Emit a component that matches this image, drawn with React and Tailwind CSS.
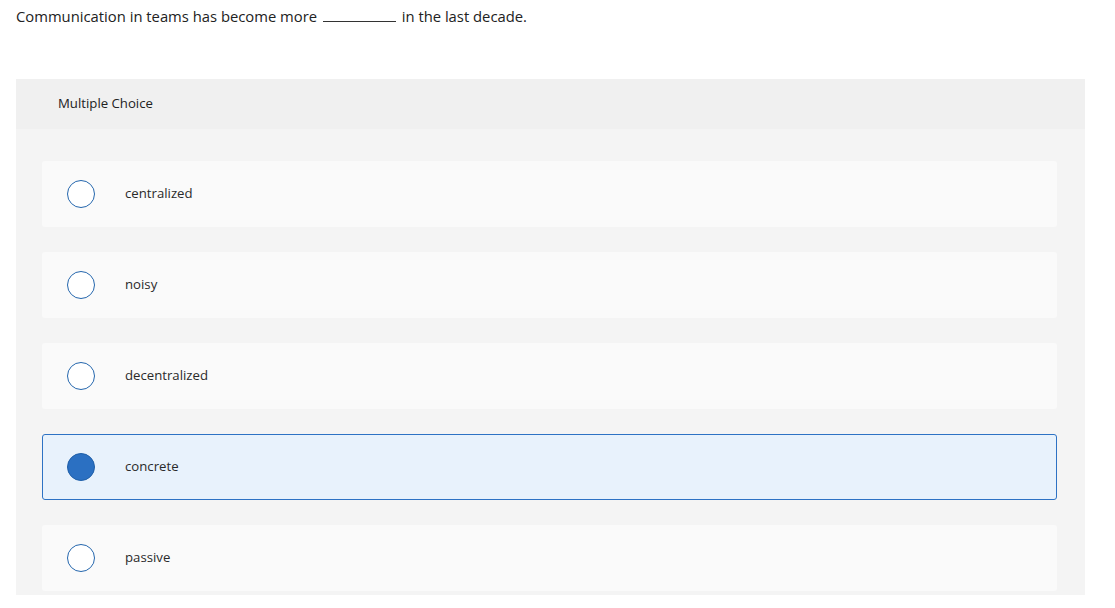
import { useState } from 'react';

const OPTIONS = ['centralized', 'noisy', 'decentralized', 'concrete', 'passive'];

function Radio({ checked }) {
  return (
    <span
      className={
        checked
          ? 'w-[28px] h-[28px] rounded-full border-[1.5px] border-[#1f5fa8] bg-[#2b70c2] shrink-0'
          : 'w-[28px] h-[28px] rounded-full border-[1.5px] border-[#2466ad] bg-white shrink-0'
      }
    />
  );
}

export default function App() {
  const [picked, setPicked] = useState('concrete');

  return (
    <div className="bg-white w-[1115px] h-[608px] overflow-hidden text-[#333]" style={{ fontFamily: '"Open Sans", Lato, sans-serif' }}>
      <p className="pt-[6px] px-4 text-[14.8px] leading-5 text-[#222]">
        Communication in teams has become more{' '}
        <span className="inline-block w-[73px] mx-[2px] border-b border-[#333] align-baseline" />{' '}
        in the last decade.
      </p>

      <div className="mt-[53px] mx-4 w-[1069px] bg-[#f4f4f4]">
        <div className="h-[50px] bg-[#f0f0f0] flex items-center pl-[42px] text-[13.2px] text-[#222]">
          Multiple Choice
        </div>
        <div className="pt-[32px] pl-[26px] pr-[28px] pb-[4px] flex flex-col gap-[25px]">
          {OPTIONS.map((o) => {
            const on = picked === o;
            return (
              <label
                key={o}
                onClick={() => setPicked(o)}
                className={
                  on
                    ? 'h-[66px] flex items-center rounded-[3px] border border-[#2d72c4] bg-[#e8f2fc] pl-[24px] cursor-pointer'
                    : 'h-[66px] flex items-center rounded-[3px] border border-transparent bg-[#fafafa] pl-[24px] cursor-pointer'
                }
              >
                <Radio checked={on} />
                <span className="ml-[30px] text-[13.2px] text-[#2a2a2a]">{o}</span>
              </label>
            );
          })}
        </div>
      </div>
    </div>
  );
}
